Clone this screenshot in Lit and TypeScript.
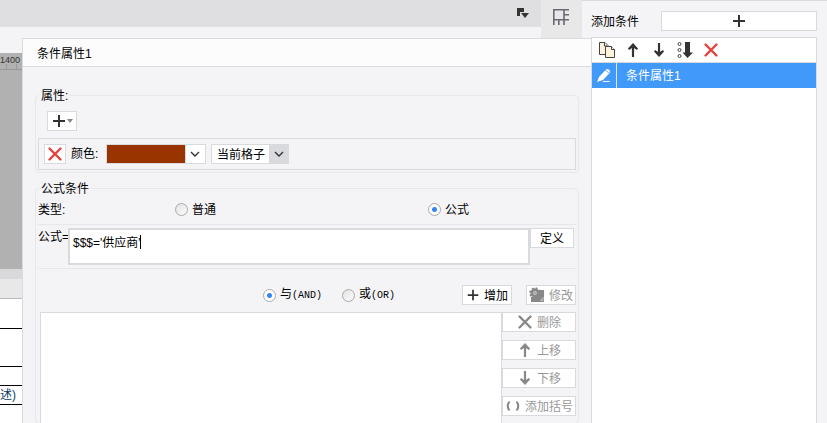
import { LitElement, html, css, svg } from "lit";
import { customElement, property, state } from "lit/decorators.js";

const glyphs: Record<string, unknown> = {
  plus: svg`<path d="M8 2v12M2 8h12" stroke="currentColor" stroke-width="2" fill="none"/>`,
  cross: svg`<path d="M2.5 2.5l11 11M13.5 2.5l-11 11" stroke="currentColor" stroke-width="2.4" stroke-linecap="round" fill="none"/>`,
  up: svg`<path d="M8 15V4" stroke="currentColor" stroke-width="2.200" fill="none"/><path d="M8 1l5 5.500-1 1.500-4-2.500L4 8 3 6.500z" fill="currentColor"/>`,
  down: svg`<path d="M8 1v11" stroke="currentColor" stroke-width="2.200" fill="none"/><path d="M8 15l5-5.500L12 8l-4 2.500L4 8 3 9.500z" fill="currentColor"/>`,
  copy: svg`<path d="M.5.5h5.500l3 3v9H.5z" fill="#fff3dc" stroke="#444"/><path d="M5.500.5v3.500h3" fill="#fff" stroke="#444"/><path d="M6.500 4.500h6l3 3v8h-9z" fill="#fff3dc" stroke="#444"/><path d="M12.500 4.500v3h3" fill="#fff" stroke="#444"/>`,
  order: svg`<g fill="none" stroke="#444"><circle cx="2.500" cy="2" r="1.500"/><circle cx="2.500" cy="8" r="1.500"/><circle cx="2.500" cy="14" r="1.500"/></g><path d="M8 0h5v10.500h3L10.500 16 5.500 10.500H8z" fill="currentColor"/>`,
  chevron: svg`<path d="M4 6l4 4 4-4" fill="none" stroke="currentColor" stroke-width="1.400"/>`,
  pencil: svg`<path d="M1 14l2-5 7-7.500q1.500-1 3 .2t.8 3L7 12z" fill="#fff"/><path d="M9 1.800l4.500 3.600" stroke="#4199f9" stroke-width=".8"/><path d="M7 13.500h7" stroke="#fff"/>`,
  gear: svg`<path d="M8 3h7v12H2v-5h6z" fill="currentColor"/><circle cx="6" cy="6" r="3.200" fill="none" stroke="currentColor" stroke-width="3"/><circle cx="6" cy="6" r="5" fill="none" stroke="currentColor" stroke-width="1.600" stroke-dasharray="2 1.930"/><circle cx="6" cy="6" r="1.500" fill="#aaa"/><path d="M14 10.500L11.500 13.500H14z" fill="none" stroke="#ccc" stroke-width=".8"/>`,
  parens: svg`<path d="M4.500 3.500Q1 8 4.500 12.500M11.500 3.500Q15 8 11.500 12.500" fill="none" stroke="currentColor" stroke-width="2"/>`,
  grid: svg`<path d="M.8 16V.8H16M.8 10.800H16M11 0v16M5.800 11v5M11 5.800h5" fill="none" stroke="#6a6875" stroke-width="1.600"/>`,
  layout: svg`<path d="M2 2h7v4H5v4H2z" fill="#333"/><path d="M6 7h8l-4 5z" fill="#333"/>`,
};

@customElement("ui-icon")
export class UiIcon extends LitElement {
  @property() name = "";
  static styles = css`
    :host { display: block; flex: none; width: 16px; height: 16px; }
    .glyph { display: block; width: 100%; height: 100%; }
  `;
  render() {
    return html`<svg class="glyph" viewBox="0 0 16 16" aria-hidden="true">${glyphs[this.name]}</svg>`;
  }
}

@customElement("app-root")
export class AppRoot extends LitElement {
  @state() private mode = "formula";
  @state() private join = "and";

  static styles = css`
    :host {
      --line: #d9dadd;
      --panel: #f4f4f7;
      --faint: #e6e7ea;
      display: grid;
      grid-template-columns: minmax(0, 1fr) 236px;
      height: 100vh;
      overflow: hidden;
      background: var(--panel);
      color: #000;
      font: 12px/16px "Liberation Sans", "Noto Sans CJK SC", sans-serif;
    }
    * { box-sizing: border-box; }
    button, select, textarea, input { font: inherit; color: inherit; margin: 0; border-radius: 0; }
    button {
      display: flex; align-items: center; justify-content: center; gap: 4px;
      height: 20px; padding: 0; border: 1px solid var(--line); background: #fff; color: #000;
      white-space: nowrap;
    }
    button span { padding-top: 2px; }
    button:disabled { color: #999; }
    button:disabled ui-icon { color: #888; }
    ui-icon { color: #333; }
    .main { display: flex; flex-direction: column; min-width: 0; min-height: 0; }
    .top { display: flex; height: 38px; flex: none; }
    .bar { flex: 1; height: 27px; background: #dfdfe1; display: flex; justify-content: flex-end; padding: 6px 10px 0 0; }
    .bar button { border: 0; background: none; width: 16px; height: 16px; }
    .top .tab { width: 40px; height: 38px; border: 0; background: #e8e8e8; padding-bottom: 4px; }
    .gap { width: 10px; border-top: 1px solid var(--line); border-left: 1px solid var(--faint); }
    .body { display: flex; flex: 1; min-height: 0; }

    .sheet { width: 22px; flex: none; overflow: hidden; display: flex; flex-direction: column; padding-top: 15px; }
    .ruler { height: 17px; flex: none; background: #b1b1b1; border-bottom: 1px solid #999; font-size: 9px; line-height: 14px; color: #333;
      background-image: linear-gradient(#999, #999), linear-gradient(#999, #999);
      background-size: 1px 5px; background-position: 6px 100%, 16px 100%; background-repeat: no-repeat; }
    .canvas { height: 199px; flex: none; background: #b1b1b1; }
    .scroll { height: 10px; flex: none; background: #d9d9dc; }
    .head { height: 20px; flex: none; background: #e8e8e8; border-bottom: 1px solid #bbb; }
    .cell { flex: none; height: 19px; background: #fff; border-bottom: 1px solid #000; color: #0c3c60; white-space: nowrap; line-height: 18px; }
    .cell.h30 { height: 30px; }
    .cell.h38 { height: 38px; }
    .cell.rest { flex: 1; border: 0; }

    .dialog { flex: 1; min-width: 0; border: solid var(--line); border-width: 1px 0 0 1px; display: flex; flex-direction: column; }
    .title { margin: 0; height: 28px; flex: none; padding-left: 14px; font-weight: 400; font-size: 12px; line-height: 30px; background: #fcfcfc; border-bottom: 1px solid var(--line); }
    .form { flex: 1; min-height: 0; padding: 19px 12px 0; display: flex; flex-direction: column; gap: 6px; }
    fieldset { margin: 0; min-width: 0; border: 1px solid var(--faint); border-radius: 4px; padding: 0 2px 2px; }
    legend { margin-left: 1px; padding: 2px 2px 0; }
    .dropper { width: 30px; margin: 7px 0 7px 9px; gap: 0; }
    .tri { border: 3px solid transparent; border-top: 4px solid #888; border-bottom: 0; }
    .dropper .tri, .color .swatch { padding: 0; }
    .prop { display: flex; align-items: center; height: 32px; padding-left: 5px; border: 1px solid var(--line); }
    .prop .del { width: 22px; }
    .red { color: #e8413c; }
    .small { width: 14px; height: 14px; }
    .prop .lbl { width: 40px; padding-left: 5px; }
    .prop .color { width: 100px; margin-right: 5px; justify-content: flex-start; gap: 0; }
    .swatch { width: 79px; height: 18px; background: #993300; border-right: 1px solid var(--line); margin-right: 1px; }
    .pick { position: relative; width: 78px; height: 20px; }
    .pick select { display: block; appearance: none; width: 78px; height: 20px; padding: 1px 0 0 5px; border: 1px solid var(--line); background: linear-gradient(90deg, #fff 57px, var(--line) 57px); }
    .pick ui-icon { position: absolute; right: 2px; top: 2px; pointer-events: none; }

    .cond { flex: 1; padding-bottom: 0; }
    .kind { display: grid; grid-template-columns: 137fr 253fr 148fr; align-items: center; height: 28px; padding-bottom: 2px; border-bottom: 1px solid var(--faint); }
    .radio { display: flex; align-items: center; gap: 4px; white-space: nowrap; }
    input[type="radio"] { appearance: none; width: 13px; height: 13px; border: 1px solid #aaa; border-radius: 50%; background: linear-gradient(135deg, #e0e0e0, #fff); }
    input[type="radio"]:checked { background: radial-gradient(circle, #3586f0 0 2px, #fff 3px); }
    .formula { display: flex; align-items: flex-start; height: 44px; padding: 3px 2px 0 0; border-bottom: 1px solid var(--faint); }
    .formula label { width: 30px; padding-top: 1px; white-space: nowrap; }
    .edit { position: relative; flex: 1; }
    textarea { display: block; width: 100%; height: 37px; border: 2px solid var(--line); background: #fff; resize: none; padding: 5px 3px; outline: none; overflow: hidden; }
    .caret { position: absolute; left: 72px; top: 7px; width: 1px; height: 14px; background: #000; }
    .formula button { width: 44px; }
    .join { display: flex; align-items: center; justify-content: flex-end; padding: 16px 0 7px; }
    .join .radio { margin-right: 20px; }
    .join .radio:nth-of-type(2) { margin-right: 67px; }
    .mono { font: 10px/16px "Liberation Mono", monospace; }
    .join button { width: 50px; }
    .join .change { margin-left: 14px; }
    .list { display: flex; padding-left: 2px; height: calc(100vh - 312px); }
    .items { flex: 1; border: 1px solid var(--line); border-bottom: 0; background: #fff; }
    .acts { width: 74px; display: flex; flex-direction: column; gap: 8px; }

    aside { display: flex; flex-direction: column; border-top: 1px solid var(--line); padding-right: 10px; min-height: 0; }
    .add { display: flex; align-items: center; height: 36px; flex: none; padding-top: 4px; }
    .add label { width: 70px; padding-top: 2px; }
    .add button { flex: 1; }
    .conds { flex: 1; background: #fff; border: 1px solid var(--line); border-bottom: 0; }
    .tools { display: flex; align-items: center; gap: 10px; height: 25px; padding-left: 7px; border-bottom: 1px solid var(--line); }
    .tools button { width: 16px; height: 16px; border: 0; background: none; }
    ul { list-style: none; margin: 0; padding: 0; }
    .item { display: flex; align-items: center; height: 25px; background: #4199f9; color: #fff; }
    .mark { display: flex; align-items: center; justify-content: center; width: 25px; height: 25px; border-right: 1px solid #dbeafb; margin-right: 9px; }
  `;

  private radio(group: "mode" | "join", value: string, label: unknown) {
    return html`<label class="radio"><input type="radio" name=${group} .checked=${this[group] === value}
      @change=${() => { this[group] = value; }}>${label}</label>`;
  }

  render() {
    return html`
      <div class="main">
        <div class="top">
          <div class="bar"><button aria-label="布局"><ui-icon name="layout"></ui-icon></button></div>
          <button class="tab" aria-label="单元格"><ui-icon name="grid"></ui-icon></button>
          <div class="gap"></div>
        </div>
        <div class="body">
          <div class="sheet">
            <div class="ruler">1400</div>
            <div class="canvas"></div>
            <div class="scroll"></div>
            <div class="head"></div>
            <div class="cell h30"></div>
            <div class="cell h38"></div>
            <div class="cell"></div>
            <div class="cell">述)</div>
            <div class="cell rest"></div>
          </div>
          <section class="dialog">
            <h1 class="title">条件属性1</h1>
            <div class="form">
              <fieldset>
                <legend>属性:</legend>
                <button class="dropper" aria-label="添加属性"><ui-icon name="plus"></ui-icon><span class="tri"></span></button>
                <div class="prop">
                  <button class="del" aria-label="删除属性"><ui-icon class="red" name="cross"></ui-icon></button>
                  <span class="lbl" id="color">颜色:</span>
                  <button class="color" aria-labelledby="color"><span class="swatch"></span><ui-icon name="chevron"></ui-icon></button>
                  <div class="pick">
                    <select aria-label="范围"><option>当前格子</option></select>
                    <ui-icon name="chevron"></ui-icon>
                  </div>
                </div>
              </fieldset>
              <fieldset class="cond">
                <legend>公式条件</legend>
                <div class="kind">
                  <span>类型:</span>
                  ${this.radio("mode", "plain", "普通")}
                  ${this.radio("mode", "formula", "公式")}
                </div>
                <div class="formula">
                  <label for="expr">公式=</label>
                  <div class="edit">
                    <textarea id="expr" spellcheck="false" .value=${"$$$='供应商'"}></textarea>
                    <span class="caret"></span>
                  </div>
                  <button><span>定义</span></button>
                </div>
                <div class="join">
                  ${this.radio("join", "and", html`<span>与<span class="mono">(AND)</span></span>`)}
                  ${this.radio("join", "or", html`<span>或<span class="mono">(OR)</span></span>`)}
                  <button><ui-icon class="small" name="plus"></ui-icon><span>增加</span></button>
                  <button class="change" disabled><ui-icon name="gear"></ui-icon><span>修改</span></button>
                </div>
                <div class="list">
                  <div class="items"></div>
                  <div class="acts">
                    <button disabled><ui-icon name="cross"></ui-icon><span>删除</span></button>
                    <button disabled><ui-icon name="up"></ui-icon><span>上移</span></button>
                    <button disabled><ui-icon name="down"></ui-icon><span>下移</span></button>
                    <button disabled><ui-icon name="parens"></ui-icon><span>添加括号</span></button>
                  </div>
                </div>
              </fieldset>
            </div>
          </section>
        </div>
      </div>
      <aside>
        <div class="add"><label for="add">添加条件</label><button id="add"><ui-icon name="plus"></ui-icon></button></div>
        <div class="conds">
          <div class="tools">
            <button aria-label="复制"><ui-icon name="copy"></ui-icon></button>
            <button aria-label="上移"><ui-icon name="up"></ui-icon></button>
            <button aria-label="下移"><ui-icon name="down"></ui-icon></button>
            <button aria-label="排序"><ui-icon name="order"></ui-icon></button>
            <button aria-label="删除"><ui-icon class="red" name="cross"></ui-icon></button>
          </div>
          <ul>
            <li class="item"><span class="mark"><ui-icon name="pencil"></ui-icon></span>条件属性1</li>
          </ul>
        </div>
      </aside>
    `;
  }
}
